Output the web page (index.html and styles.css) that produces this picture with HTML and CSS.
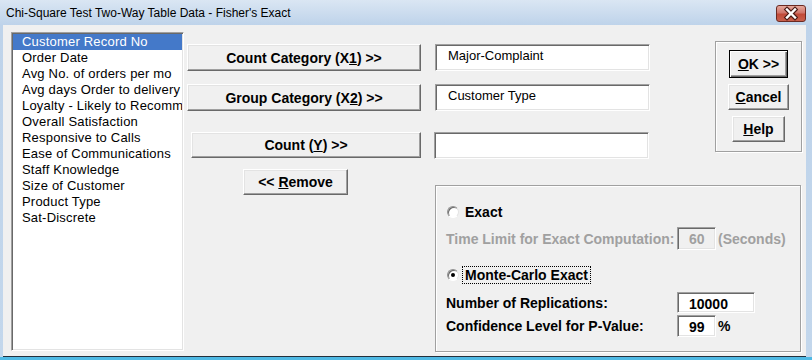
FILE: index.html
```html
<!DOCTYPE html>
<html lang="en">
	<head>
		<meta charset="UTF-8" />
		<meta name="viewport" content="width=device-width, initial-scale=1.0" />
		<title>Chi-Square Test Two-Way Table Data - Fisher's Exact</title>
		<link rel="stylesheet" href="styles.css">
	</head>
	<body>
		<div class="window">
			<div class="titlebar">
				<span class="title">Chi-Square Test Two-Way Table Data - Fisher's Exact</span>
				<div class="close">
					<svg width="28" height="15" viewBox="0 0 28 15">
						<path d="M10 3.5 L18 11.5 M18 3.5 L10 11.5" stroke="#4a1a14" stroke-width="4.6" stroke-linecap="square" />
						<path d="M10 3.5 L18 11.5 M18 3.5 L10 11.5" stroke="#fff" stroke-width="2.4" stroke-linecap="square" />
					</svg>
				</div>
			</div>

			<div class="client">
				<ul class="fieldlist">
					<li class="selected">Customer Record No</li>
					<li>Order Date</li>
					<li>Avg No. of orders per mo</li>
					<li>Avg days Order to delivery</li>
					<li>Loyalty - Likely to Recomm</li>
					<li>Overall Satisfaction</li>
					<li>Responsive to Calls</li>
					<li>Ease of Communications</li>
					<li>Staff Knowledge</li>
					<li>Size of Customer</li>
					<li>Product Type</li>
					<li>Sat-Discrete</li>
				</ul>

				<div class="panel">
					<div class="top">
						<div class="pickers">
							<div class="pick-row">
								<button class="btn">Count Category (X<u>1</u>) &gt;&gt;</button>
								<div class="field">Major-Complaint</div>
							</div>
							<div class="pick-row">
								<button class="btn">Group Category (X<u>2</u>) &gt;&gt;</button>
								<div class="field">Customer Type</div>
							</div>
							<div class="pick-row count">
								<button class="btn">Count (<u>Y</u>) &gt;&gt;</button>
								<div class="field"></div>
							</div>
						</div>

						<div class="group actions">
							<button class="btn default"><u>O</u>K &gt;&gt;</button>
							<button class="btn cancel"><u>C</u>ancel</button>
							<button class="btn help"><u>H</u>elp</button>
						</div>
					</div>

					<div class="bottom">
						<div class="remove-col">
							<button class="btn remove">&lt;&lt; <u>R</u>emove</button>
						</div>

						<div class="group options">
							<div class="radio-row exact">
								<span class="radio"></span>
								<span class="radio-label">Exact</span>
							</div>
							<div class="opt-row time disabled">
								<span>Time Limit for Exact Computation:</span>
								<span class="num small off">60</span>
								<span class="unit">(Seconds)</span>
							</div>
							<div class="radio-row monte">
								<span class="radio checked"></span>
								<span class="radio-label focus">Monte-Carlo Exact</span>
							</div>
							<div class="opt-row reps">
								<span>Number of Replications:</span>
								<span class="num wide">10000</span>
							</div>
							<div class="opt-row conf">
								<span>Confidence Level for P-Value:</span>
								<span class="num small">99</span>
								<span class="unit">%</span>
							</div>
						</div>
					</div>
				</div>
			</div>
		</div>
	</body>
</html>
```

FILE: styles.css
```css
* {
	box-sizing: border-box;
}
body {
	margin: 0;
	background: #c3d7ec;
	font-family: "Liberation Sans", Arial, sans-serif;
	color: #000;
}
.window {
	width: 812px;
	height: 360px;
	display: flex;
	flex-direction: column;
	padding: 0 6px 0 3px;
	background: linear-gradient(#dae6f3, #bed3ea 25px, #c3d7ec);
	border-bottom: 3px solid #4fb9e4;
	overflow: hidden;
}
.titlebar {
	height: 25px;
	flex-shrink: 0;
	display: flex;
	align-items: center;
	justify-content: space-between;
	padding-left: 3px;
}
.title {
	font-size: 12px;
}
.close {
	width: 30px;
	height: 17px;
	margin-top: 1px;
	border: 1px solid #6b2a22;
	border-radius: 3px;
	background: linear-gradient(#e6a89c, #d0756a 45%, #c14a38 55%, #c9604c);
	display: flex;
	align-items: center;
	justify-content: center;
}
.client {
	flex: 1;
	display: flex;
	align-items: flex-start;
	background: #f0f0f0;
	border-bottom: 1px solid #23303d;
}

/* variable list */
.fieldlist {
	list-style: none;
	margin: 7px 0 0 8px;
	padding: 1px;
	width: 173px;
	height: 319px;
	background: #fff;
	border: 1px solid;
	border-color: #a0a0a0 #fff #fff #a0a0a0;
	box-shadow: inset 1px 1px #696969, inset -1px -1px #e3e3e3;
	overflow: hidden;
}
.fieldlist li {
	height: 16px;
	line-height: 16px;
	padding-left: 9px;
	font-size: 13px;
	letter-spacing: 0.2px;
	white-space: nowrap;
	overflow: hidden;
}
.fieldlist li.selected {
	background: #4479c9;
	color: #fff;
}

/* buttons */
.btn {
	background: #f0f0f0;
	border: 1px solid;
	border-color: #fff #696969 #696969 #fff;
	box-shadow: inset -1px -1px #a0a0a0, inset 1px 1px #e3e3e3;
	font-family: "Liberation Sans", Arial, sans-serif;
	font-weight: bold;
	font-size: 14px;
	color: #000;
	padding: 0;
}
.btn.default {
	border-color: #000;
	box-shadow: inset 1px 1px #fff, inset -1px -1px #696969, inset -2px -2px #a0a0a0;
}
.group {
	border: 1px solid #a0a0a0;
	box-shadow: inset 1px 1px #fff, 1px 1px #fff;
}

.panel {
	margin: 16px 0 0 3px;
	width: 615px;
	display: flex;
	flex-direction: column;
}
.top {
	display: flex;
	align-items: flex-start;
	gap: 65px;
}
.pickers {
	width: 463px;
	padding-top: 3px;
	display: flex;
	flex-direction: column;
	gap: 13px;
}
.pick-row {
	display: flex;
	gap: 14px;
}
.pick-row .btn {
	width: 234px;
	height: 27px;
}
.pick-row.count {
	margin-top: 8px;
	gap: 13px;
}
.pick-row.count .btn {
	margin-left: 4px;
	width: 230px;
	height: 26px;
}
.field {
	width: 215px;
	height: 27px;
	padding: 3px 0 0 12px;
	font-size: 13px;
	background: #fff;
	border: 1px solid;
	border-color: #a0a0a0 #fff #fff #a0a0a0;
	box-shadow: inset 1px 1px #696969, inset -1px -1px #e3e3e3;
}

.actions {
	width: 87px;
	height: 111px;
	padding-top: 8px;
	display: flex;
	flex-direction: column;
	align-items: center;
	gap: 6px;
}
.actions .default {
	width: 59px;
	height: 28px;
}
.actions .cancel {
	width: 61px;
	height: 26px;
}
.actions .help {
	width: 53px;
	height: 26px;
}

.bottom {
	display: flex;
	align-items: flex-start;
}
.remove-col {
	width: 248px;
	padding: 10px 0 0 56px;
}
.remove {
	width: 105px;
	height: 26px;
}

/* test options */
.options {
	margin-top: 26px;
	width: 366px;
	height: 167px;
	padding: 17px 0 0 10px;
	display: flex;
	flex-direction: column;
	font-size: 14px;
	font-weight: bold;
}
.radio-row {
	height: 18px;
	display: flex;
	align-items: center;
}
.radio-row.monte {
	margin-top: 16px;
}
.radio {
	position: relative;
	width: 12px;
	height: 12px;
	margin-left: 1px;
	border-radius: 50%;
	background: #fff;
	border: 1px solid;
	border-color: #909090 #e3e3e3 #fff #909090;
	box-shadow: inset 1px 1px #696969;
}
.radio.checked::after {
	content: "";
	position: absolute;
	left: 3px;
	top: 3px;
	width: 4px;
	height: 4px;
	border-radius: 50%;
	background: #000;
}
.radio-label {
	margin-left: 3px;
	padding: 0 2px;
	line-height: 16px;
	border: 1px dotted transparent;
}
.radio-label.focus {
	border-color: #000;
}
.opt-row {
	display: grid;
	grid-template-columns: 231px auto auto;
	align-items: center;
	justify-content: start;
}
.opt-row.time {
	margin-top: 6px;
	height: 23px;
}
.opt-row.reps {
	margin-top: 8px;
	height: 21px;
}
.opt-row.conf {
	margin-top: 2px;
	height: 22px;
}
.disabled {
	color: #a0a0a0;
}
.num {
	height: 100%;
	padding: 3px 0 0 11px;
	background: #fff;
	border: 1px solid;
	border-color: #a0a0a0 #fff #fff #a0a0a0;
	box-shadow: inset 1px 1px #696969, inset -1px -1px #e3e3e3;
}
.num.off {
	background: #f0f0f0;
	color: #a0a0a0;
}
.num.small {
	width: 39px;
}
.num.wide {
	width: 78px;
}
.unit {
	margin-left: 2px;
}
```
